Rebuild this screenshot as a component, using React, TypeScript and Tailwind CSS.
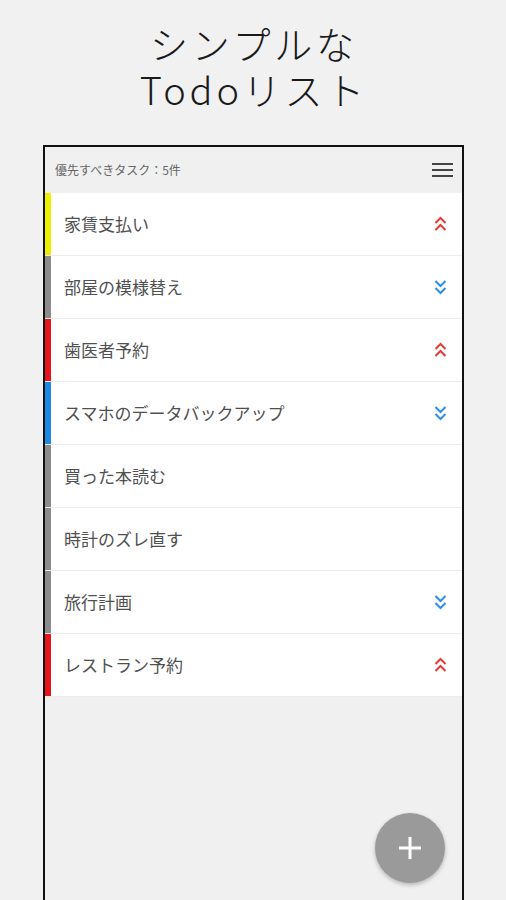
import React from "react";

type Priority = "high" | "low" | "none";

interface Task {
  title: string;
  color: string;
  priority: Priority;
}

const tasks: Task[] = [
  { title: "家賃支払い", color: "bg-[#eeee00]", priority: "high" },
  { title: "部屋の模様替え", color: "bg-[#8c8c8c]", priority: "low" },
  { title: "歯医者予約", color: "bg-[#e8141c]", priority: "high" },
  { title: "スマホのデータバックアップ", color: "bg-[#1e88e5]", priority: "low" },
  { title: "買った本読む", color: "bg-[#8c8c8c]", priority: "none" },
  { title: "時計のズレ直す", color: "bg-[#8c8c8c]", priority: "none" },
  { title: "旅行計画", color: "bg-[#8c8c8c]", priority: "low" },
  { title: "レストラン予約", color: "bg-[#e8141c]", priority: "high" },
];

function PriorityIcon({ priority }: { priority: Priority }) {
  if (priority === "none") return null;
  const up = priority === "high";
  return (
    <svg width="13" height="16" viewBox="0 0 13 16" fill="none" className={up ? "text-[#e53935]" : "text-[#2f8ee8]"}>
      {up ? (
        <>
          <path d="M1.5 7 L6.5 2 L11.5 7" stroke="currentColor" strokeWidth="2" />
          <path d="M1.5 14 L6.5 9 L11.5 14" stroke="currentColor" strokeWidth="2" />
        </>
      ) : (
        <>
          <path d="M1.5 2 L6.5 7 L11.5 2" stroke="currentColor" strokeWidth="2" />
          <path d="M1.5 9 L6.5 14 L11.5 9" stroke="currentColor" strokeWidth="2" />
        </>
      )}
    </svg>
  );
}

function TaskRow({ task }: { task: Task }) {
  return (
    <div className="flex h-[63px] bg-white border-b border-[#ececec]">
      <div className={`w-[6px] shrink-0 ${task.color}`} />
      <div className="flex flex-1 items-center justify-between pl-[13px] pr-[15px]">
        <span className="text-[17px] text-[#505050]">{task.title}</span>
        <PriorityIcon priority={task.priority} />
      </div>
    </div>
  );
}

export default function App() {
  return (
    <div
      className="h-[900px] w-[506px] overflow-hidden bg-[#f1f1f1]"
      style={{ fontFamily: '"Noto Sans CJK JP", "Noto Sans", sans-serif' }}
    >
      {/* Title */}
      <div className="flex h-[145px] flex-col items-center pt-[20px] pl-[2px]">
        <h1 className="text-center text-[38px] font-light leading-[46px] tracking-[0.1em] text-[#1a1a1a]">
          シンプルな
          <br />
          Todoリスト
        </h1>
      </div>

      {/* Phone frame */}
      <div className="relative ml-[43px] h-[800px] w-[421px] border-2 border-b-0 border-[#111] bg-[#f0f0f0]">
        <div className="flex h-[46px] items-center justify-between pl-[10px] pr-[9px]">
          <span className="text-[12px] text-[#666]">優先すべきタスク：5件</span>
          <div className="flex w-[21px] flex-col gap-[4px]">
            <div className="h-[2px] bg-[#444]" />
            <div className="h-[2px] bg-[#444]" />
            <div className="h-[2px] bg-[#444]" />
          </div>
        </div>

        <div>
          {tasks.map((t) => (
            <TaskRow key={t.title} task={t} />
          ))}
        </div>

        <button className="absolute left-[330px] top-[666px] flex h-[70px] w-[70px] items-center justify-center rounded-full bg-[#9a9a9a] shadow-[0_2px_4px_rgba(0,0,0,0.25)]">
          <svg width="24" height="24" viewBox="0 0 24 24">
            <path d="M12 1 V23 M1 12 H23" stroke="white" strokeWidth="3" />
          </svg>
        </button>
      </div>
    </div>
  );
}
